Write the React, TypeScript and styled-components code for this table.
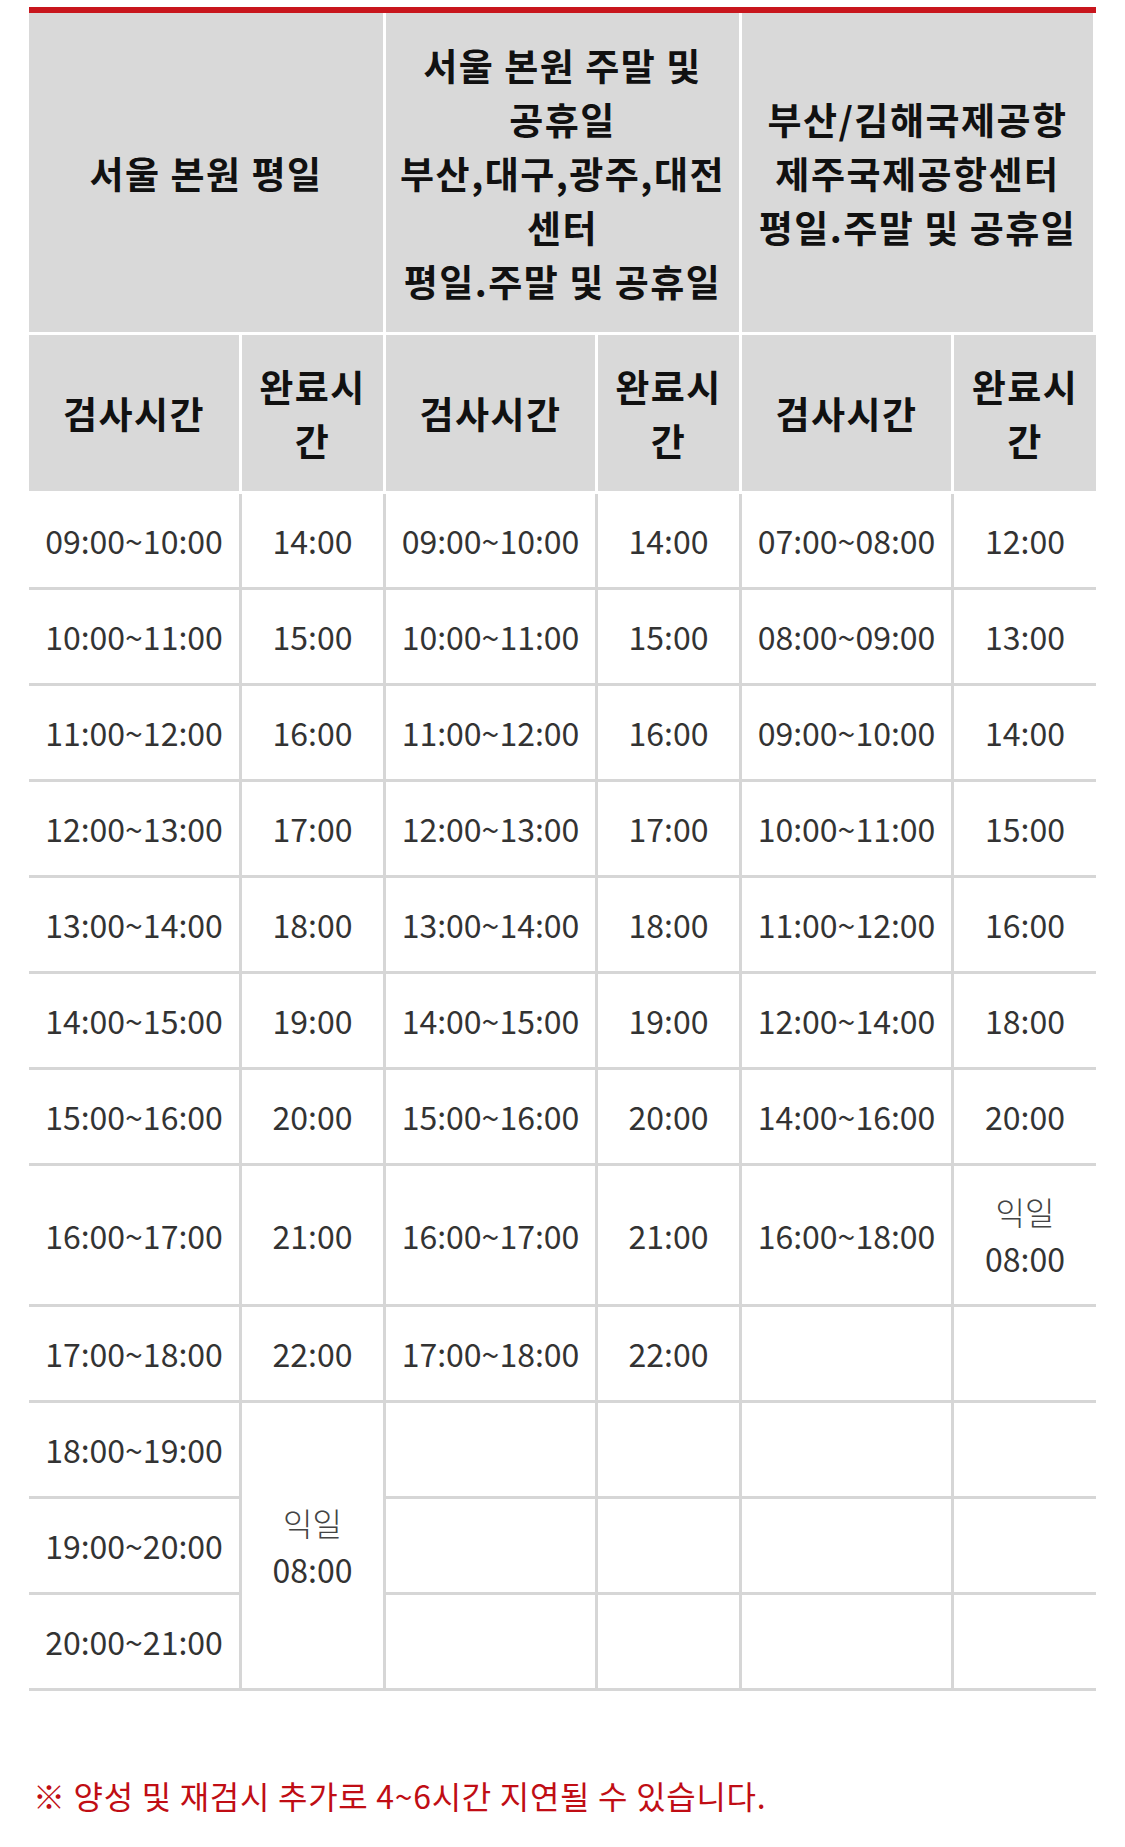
import React from "react";
import styled, { createGlobalStyle } from "styled-components";

const GlobalStyle = createGlobalStyle`
  html, body {
    margin: 0;
    padding: 0;
    background: #ffffff;
  }
  body {
    font-family: "Noto Sans CJK KR", "Noto Sans", sans-serif;
  }
`;

type Row = {
  test: string;
  done?: string;
  test2?: string;
  done2?: string;
  test3?: string;
  done3?: React.ReactNode;
  tall?: boolean;
};

const nextDay = (
  <>
    <Light>익일</Light>
    <br />
    08:00
  </>
);

const rows: Row[] = [
  { test: "09:00~10:00", done: "14:00", test2: "09:00~10:00", done2: "14:00", test3: "07:00~08:00", done3: "12:00" },
  { test: "10:00~11:00", done: "15:00", test2: "10:00~11:00", done2: "15:00", test3: "08:00~09:00", done3: "13:00" },
  { test: "11:00~12:00", done: "16:00", test2: "11:00~12:00", done2: "16:00", test3: "09:00~10:00", done3: "14:00" },
  { test: "12:00~13:00", done: "17:00", test2: "12:00~13:00", done2: "17:00", test3: "10:00~11:00", done3: "15:00" },
  { test: "13:00~14:00", done: "18:00", test2: "13:00~14:00", done2: "18:00", test3: "11:00~12:00", done3: "16:00" },
  { test: "14:00~15:00", done: "19:00", test2: "14:00~15:00", done2: "19:00", test3: "12:00~14:00", done3: "18:00" },
  { test: "15:00~16:00", done: "20:00", test2: "15:00~16:00", done2: "20:00", test3: "14:00~16:00", done3: "20:00" },
  { test: "16:00~17:00", done: "21:00", test2: "16:00~17:00", done2: "21:00", test3: "16:00~18:00", done3: nextDay, tall: true },
  { test: "17:00~18:00", done: "22:00", test2: "17:00~18:00", done2: "22:00" },
  { test: "18:00~19:00" },
  { test: "19:00~20:00" },
  { test: "20:00~21:00" },
];

const colWidths = [213, 144, 212, 144, 212, 142];

const App = () => {
  return (
    <Page>
      <GlobalStyle />
      <Schedule>
        <colgroup>
          {colWidths.map((w, i) => (
            <col key={i} style={{ width: w }} />
          ))}
        </colgroup>
        <thead>
          <tr>
            <GroupHead colSpan={2}>서울 본원 평일</GroupHead>
            <GroupHead colSpan={2}>
              서울 본원 주말 및<br />
              공휴일<br />
              부산,대구,광주,대전<br />
              센터<br />
              평일.주말 및 공휴일
            </GroupHead>
            <GroupHead colSpan={2}>
              부산/김해국제공항<br />
              제주국제공항센터<br />
              평일.주말 및 공휴일
            </GroupHead>
          </tr>
          <tr>
            <SubHead>검사시간</SubHead>
            <SubHead>완료시간</SubHead>
            <SubHead>검사시간</SubHead>
            <SubHead>완료시간</SubHead>
            <SubHead>검사시간</SubHead>
            <SubHead $last>완료시간</SubHead>
          </tr>
        </thead>
        <tbody>
          {rows.map((r, idx) => (
            <tr key={r.test}>
              <Cell $tall={r.tall}>{r.test}</Cell>
              {idx < 9 && <Cell>{r.done}</Cell>}
              {idx === 9 && <Cell rowSpan={3}>{nextDay}</Cell>}
              <Cell>{r.test2}</Cell>
              <Cell>{r.done2}</Cell>
              <Cell>{r.test3}</Cell>
              <Cell $last>{r.done3}</Cell>
            </tr>
          ))}
        </tbody>
      </Schedule>
      <Notice>※ 양성 및 재검시 추가로 4~6시간 지연될 수 있습니다.</Notice>
    </Page>
  );
};

const Page = styled.div`
  padding: 7px 29px 40px;
  box-sizing: border-box;
  width: 1125px;
`;

const Schedule = styled.table`
  width: 1067px;
  table-layout: fixed;
  border-collapse: separate;
  border-spacing: 0;
  border-top: 6px solid #c8161d;
`;

const GroupHead = styled.th`
  height: 319px;
  padding: 0 6px;
  background: #d9d9d9;
  border-right: 3px solid #ffffff;
  border-bottom: 3px solid #ffffff;
  color: #111111;
  font-size: 37px;
  line-height: 54px;
  letter-spacing: 1.5px;
  font-weight: 700;
  text-align: center;
  vertical-align: middle;
`;

const SubHead = styled.th<{ $last?: boolean }>`
  height: 156px;
  padding: 0 4px;
  background: #d9d9d9;
  border-right: ${(p) => (p.$last ? "none" : "3px solid #ffffff")};
  border-bottom: 3px solid #ffffff;
  color: #111111;
  font-size: 37px;
  line-height: 54px;
  letter-spacing: 1.5px;
  font-weight: 700;
  text-align: center;
  vertical-align: middle;
`;

const Cell = styled.td<{ $last?: boolean; $tall?: boolean }>`
  height: 93px;
  padding: 0 4px;
  border-right: ${(p) => (p.$last ? "none" : "3px solid #d6d6d6")};
  border-bottom: 3px solid #d6d6d6;
  color: #333333;
  font-size: 32px;
  line-height: 47px;
  text-align: center;
  vertical-align: middle;
  white-space: nowrap;
  ${(p) => p.$tall && "height: 138px;"}
`;

function Light({ children }: { children: React.ReactNode }) {
  return <LightText>{children}</LightText>;
}

const LightText = styled.span`
  font-weight: 300;
  color: #444444;
`;

const Notice = styled.p`
  margin: 82px 0 0 4px;
  color: #c00d14;
  font-size: 32px;
  line-height: 45px;
  letter-spacing: 0.7px;
  font-weight: 400;
`;

export default App;
